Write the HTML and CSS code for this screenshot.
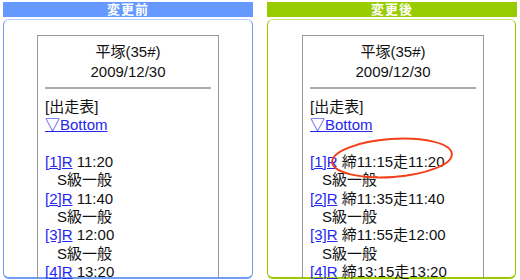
FILE: index.html
```html
<!DOCTYPE html>
<html lang="ja">
<head>
    <meta charset="UTF-8">
    <title>変更前 / 変更後</title>
    <link rel="stylesheet" href="styles.css">
</head>
<body>

<div class="compare">
    <div class="panel before">
        <div class="bar">変更前</div>
        <div class="box">
            <div class="screen">
                <div class="head">
                    <div>平塚(35#)</div>
                    <div>2009/12/30</div>
                </div>
                <div class="rule"></div>
                <div class="list">
                    <div>[出走表]</div>
                    <div><a href="#">▽Bottom</a></div>
                    <div>&nbsp;</div>
                    <div><a href="#">[1]R</a> 11:20</div>
                    <div class="grade">S級一般</div>
                    <div><a href="#">[2]R</a> 11:40</div>
                    <div class="grade">S級一般</div>
                    <div><a href="#">[3]R</a> 12:00</div>
                    <div class="grade">S級一般</div>
                    <div><a href="#">[4]R</a> 13:20</div>
                </div>
            </div>
        </div>
    </div>

    <div class="panel after">
        <div class="bar">変更後</div>
        <div class="box">
            <div class="screen">
                <div class="head">
                    <div>平塚(35#)</div>
                    <div>2009/12/30</div>
                </div>
                <div class="rule"></div>
                <div class="list">
                    <div>[出走表]</div>
                    <div><a href="#">▽Bottom</a></div>
                    <div>&nbsp;</div>
                    <div><a href="#">[1]R</a> 締11:15走11:20</div>
                    <div class="grade">S級一般</div>
                    <div><a href="#">[2]R</a> 締11:35走11:40</div>
                    <div class="grade">S級一般</div>
                    <div><a href="#">[3]R</a> 締11:55走12:00</div>
                    <div class="grade">S級一般</div>
                    <div><a href="#">[4]R</a> 締13:15走13:20</div>
                </div>
            </div>
            <!-- red circle marking the changed time -->
            <svg class="mark" width="128" height="46" viewBox="0 0 128 46">
                <ellipse cx="64" cy="22" rx="60" ry="19" transform="rotate(-4 64 22)" fill="none" stroke="#f4401a" stroke-width="2"/>
            </svg>
        </div>
    </div>
</div>

</body>
</html>
```

FILE: styles.css
```css
body {
    margin: 0;
    font-family: "Liberation Sans", "Noto Sans CJK JP", sans-serif;
    color: #111;
    background: #fff;
    overflow: hidden;
}
.compare {
    display: flex;
    gap: 14px;
    padding: 2px 0 0 3px;
}
.panel {
    width: 250px;
}
.bar {
    height: 15px;
    line-height: 15px;
    font-size: 13px;
    font-weight: bold;
    color: #fff;
    text-align: center;
    letter-spacing: 1px;
}
.box {
    position: relative;
    box-sizing: border-box;
    margin-top: 2px;
    height: 260px;
    border: 1px solid;
    border-bottom-width: 2px;
    border-radius: 6px;
    padding: 15px 0 0 33px;
}
.before .bar { background: #6699ff; }
.before .box { border-color: #6f9ef8; border-top-color: #b5cdfc; }
.after .bar { background: #99cc00; }
.after .box { border-color: #99cc00; border-top-color: #c6e36a; width: 249px; padding-left: 34px; }
.screen {
    box-sizing: border-box;
    width: 182px;
    height: 245px;
    overflow: hidden;
    border: 1px solid #999;
    border-bottom: none;
    font-size: 15px;
}
.head {
    padding-top: 6px;
    text-align: center;
    line-height: 20px;
}
.rule {
    height: 2px;
    background: #aaa;
    margin: 5px 7px 0 7px;
}
.list {
    padding: 9px 0 0 7px;
    line-height: 18.33px;
    white-space: nowrap;
}
.list a {
    color: #2626f0;
}
.grade {
    padding-left: 12px;
}
.mark {
    position: absolute;
    left: 60px;
    top: 116px;
}
```
